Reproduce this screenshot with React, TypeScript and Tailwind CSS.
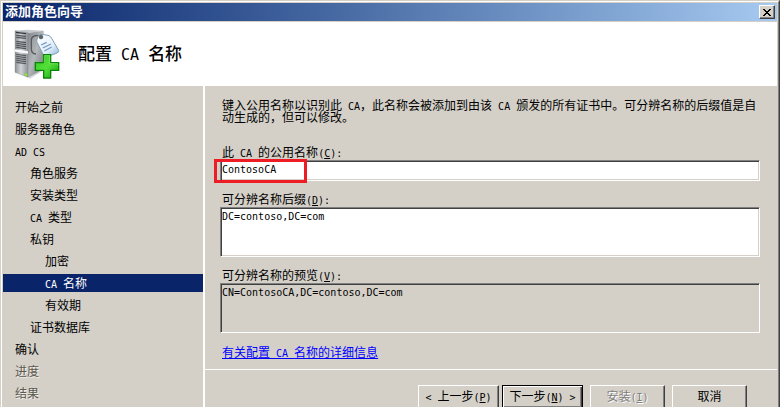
import type { ReactNode } from "react";
import clsx from "clsx";

interface IStep {
  label: string;
  level: 0 | 1 | 2;
  active?: boolean;
  disabled?: boolean;
}

const steps: IStep[] = [
  { label: "开始之前", level: 0 },
  { label: "服务器角色", level: 0 },
  { label: "AD CS", level: 0 },
  { label: "角色服务", level: 1 },
  { label: "安装类型", level: 1 },
  { label: "CA 类型", level: 1 },
  { label: "私钥", level: 1 },
  { label: "加密", level: 2 },
  { label: "CA 名称", level: 2, active: true },
  { label: "有效期", level: 2 },
  { label: "证书数据库", level: 1 },
  { label: "确认", level: 0 },
  { label: "进度", level: 0, disabled: true },
  { label: "结果", level: 0, disabled: true },
];

const indents = ["pl-3", "pl-[27px]", "pl-[42px]"];

const sunken =
  "block w-full resize-none border border-t-[#808080] border-l-[#808080] border-r-white border-b-white px-px font-['DejaVu_Sans_Mono',monospace] text-[10px] leading-3 text-black outline-none inset-shadow-[1px_1px_0_#404040,-1px_-1px_0_#d4d0c8]";

// Latin runs are half as wide as the Chinese characters around them
const Latin = ({ children }: { children: ReactNode }) => (
  <span className="font-['DejaVu_Sans_Mono',monospace] text-[10px] leading-2 whitespace-pre">
    {children}
  </span>
);

const mixed = (text: string) =>
  text
    .split(/([\x20-\x7e]+)/)
    .map((part, i) => (i % 2 ? <Latin key={i}>{part}</Latin> : part));

const Hotkey = ({ letter, after = "" }: { letter: string; after?: string }) => (
  <Latin>
    (<u className="underline-offset-1">{letter}</u>){after}
  </Latin>
);

const ServerIcon = () => (
  <svg className="size-[60px]" viewBox="0 0 180 180" aria-hidden="true">
    <defs>
      <linearGradient id="side" x1="0" y1="0" x2="1" y2="1">
        <stop offset="0" stopColor="#7f8487" />
        <stop offset="0.5" stopColor="#b4b8bb" />
        <stop offset="1" stopColor="#6c7073" />
      </linearGradient>
      <linearGradient id="front" x1="0" y1="0" x2="1" y2="0">
        <stop offset="0" stopColor="#8b9094" />
        <stop offset="0.45" stopColor="#cfd3d6" />
        <stop offset="1" stopColor="#8f9498" />
      </linearGradient>
      <linearGradient id="tag" x1="0" y1="0" x2="1" y2="1">
        <stop offset="0" stopColor="#ffffff" />
        <stop offset="0.6" stopColor="#e3f0f9" />
        <stop offset="1" stopColor="#88b4d6" />
      </linearGradient>
      <linearGradient id="plus" x1="0" y1="0" x2="1" y2="1">
        <stop offset="0" stopColor="#2cc421" />
        <stop offset="0.5" stopColor="#55e03a" />
        <stop offset="1" stopColor="#16a312" />
      </linearGradient>
    </defs>
    <path d="M60 160 L66 164 L112 136 V120 L60 140Z" fill="#b8babb" opacity="0.6" />
    <path d="M57 26 L107 20 V135 L62 160 L57 158Z" fill="url(#side)" />
    <path d="M21 20 L56 17 L107 20 L60 28Z" fill="#c4c8cb" />
    <path d="M21 20 L60 26 V160 L21 145Z" fill="url(#front)" stroke="#74787b" />
    <path d="M24 25 L54 29" stroke="#303437" strokeWidth="4" />
    <path
      d="M25 34 L54 37 M25 40 L54 43 M25 52 L54 56 M25 58 L54 62 M25 64 L54 68 M25 70 L54 74"
      stroke="#505558"
      strokeWidth="4"
    />
    <path d="M21 76 L60 82 V89 L21 83Z" fill="#f7f8f9" />
    <path
      d="M25 91 L54 95 M25 97 L54 101 M25 103 L54 107 M25 109 L54 113 M25 115 L54 119"
      stroke="#565b5e"
      strokeWidth="4"
    />
    <path d="M51 147 L58 149 V156 L51 154Z" fill="#98ff21" stroke="#58b31c" />
    <path
      d="M99 37 C82 31 69 37 70 49 V76 Q71 89 84 90"
      fill="none"
      stroke="#585c60"
      strokeWidth="4"
    />
    <path
      d="M91 36 Q94 30 105 31 L123 35 Q129 38 131 43 L152 79 Q153 84 148 87 L114 99 Q109 99 107 94 L86 53 Q86 46 91 36Z"
      fill="url(#tag)"
      stroke="#7f9fb4"
      strokeWidth="3"
    />
    <circle cx="99" cy="39" r="6" fill="#5e6265" stroke="#36393c" />
    <path
      d="M99 63 L116 55 M104 72 L129 60 M109 81 L131 69"
      stroke="#7898c6"
      strokeWidth="4"
    />
    <path
      d="M107 92 H128 V116 H152 V139 H128 V162 H107 V139 H82 V116 H107Z"
      fill="url(#plus)"
      stroke="#078607"
      strokeWidth="4"
    />
    <path
      d="M109 119 V95 H125 V119 H149 V125"
      fill="none"
      stroke="#a2f28b"
      strokeWidth="2"
      opacity="0.7"
    />
  </svg>
);

interface IButtonProps {
  children: ReactNode;
  wide?: boolean;
  primary?: boolean;
  disabled?: boolean;
}

const WizardButton = ({ children, wide, primary, disabled }: IButtonProps) => (
  <button
    type="button"
    disabled={disabled}
    className={clsx(
      "h-6 shrink-0 border pb-px text-xs leading-3 whitespace-nowrap",
      wide ? "w-[81px]" : "w-[75px]",
      primary
        ? "border-black inset-shadow-[1px_1px_0_#fff,-1px_-1px_0_#404040,-2px_-2px_0_#808080]"
        : "border-t-white border-l-white border-r-[#404040] border-b-[#404040] inset-shadow-[-1px_-1px_0_#808080]",
      disabled && "text-[#808080] text-shadow-[1px_1px_0_#fff]",
    )}
  >
    {children}
  </button>
);

const StepList = () => (
  <nav className="w-[202px] shrink-0 border-r-2 border-white pt-3">
    <ul className="flex flex-col gap-1">
      {steps.map(({ label, level, active, disabled }) => (
        <li
          key={label}
          aria-current={active ? "step" : undefined}
          className={clsx(
            "h-[18px] leading-5",
            indents[level],
            active && "bg-[#0a246a] text-white",
            disabled && "text-[#5c584e] text-shadow-[1px_1px_0_#eeece8]",
          )}
        >
          {mixed(label)}
        </li>
      ))}
    </ul>
  </nav>
);

const CaNameForm = () => (
  <form className="pt-3.5 pr-[17px] pl-[15px]">
    <p className="pl-[2px] leading-3">
      {mixed(
        "键入公用名称以识别此 CA，此名称会被添加到由该 CA 颁发的所有证书中。可分辨名称的后缀值是自动生成的，但可以修改。",
      )}
    </p>

    <label htmlFor="common-name" className="mt-[22px] block pl-[2px] leading-3.5">
      {mixed("此 CA 的公用名称")}
      <Hotkey letter="C" after=":" />
    </label>
    <div className="relative">
      <input
        id="common-name"
        type="text"
        defaultValue="ContosoCA"
        className={clsx(sunken, "h-[21px] bg-white pb-[2px]")}
      />
      <div className="pointer-events-none absolute -top-px -left-1.5 h-6 w-[93px] border-3 border-[#ee1c25]" />
    </div>

    <label htmlFor="suffix" className="mt-3 block pl-[2px] leading-3.5">
      可分辨名称后缀
      <Hotkey letter="D" after=":" />
    </label>
    <textarea
      id="suffix"
      defaultValue="DC=contoso,DC=com"
      className={clsx(sunken, "h-[50px] bg-white pt-[3px]")}
    />

    <label htmlFor="preview" className="mt-3 block pl-[2px] leading-3.5">
      可分辨名称的预览
      <Hotkey letter="V" after=":" />
    </label>
    <textarea
      id="preview"
      readOnly
      defaultValue="CN=ContosoCA,DC=contoso,DC=com"
      className={clsx(sunken, "h-[50px] bg-[#d4d0c8] pt-[3px]")}
    />

    <div className="mt-3 pb-2 pl-[2px] leading-4">
      <a href="#details" className="text-[#0000ff] underline underline-offset-1">
        {mixed("有关配置 CA 名称的详细信息")}
      </a>
    </div>
  </form>
);

const App = () => {
  return (
    <div className="flex h-screen flex-col overflow-hidden border-t border-r border-l border-t-[#d4d0c8] border-r-[#404040] border-l-[#d4d0c8] bg-[#d4d0c8] font-['Liberation_Sans','Noto_Sans_CJK_SC',sans-serif] text-xs text-black">
      <div className="flex min-h-0 flex-1 flex-col border-t border-r border-l border-t-white border-r-[#808080] border-l-white pt-px pr-px pl-px">
        <div className="flex h-[18px] shrink-0 items-center justify-between bg-linear-to-r from-[#0a246a] to-[#a6caf0] pr-[2px] pl-[2px]">
          <h1 className="text-[13px] leading-[18px] font-bold text-white">
            添加角色向导
          </h1>
          <button
            type="button"
            aria-label="关闭"
            className="flex h-3.5 w-4 items-center justify-center border border-t-white border-r-[#404040] border-b-[#404040] border-l-white bg-[#d4d0c8] inset-shadow-[-1px_-1px_0_#808080]"
          >
            <svg
              className="h-[7px] w-2"
              viewBox="0 0 8 7"
              shapeRendering="crispEdges"
              aria-hidden="true"
            >
              <path d="M0 0h2v1h1v1h2v-1h1v-1h2v1h-1v1h-1v1h-1v1h1v1h1v1h1v1h-2v-1h-1v-1h-2v1h-1v1h-2v-1h1v-1h1v-1h1v-1h-1v-1h-1v-1h-1z" />
            </svg>
          </button>
        </div>

        <header className="mt-px flex h-16 shrink-0 items-center gap-2.5 bg-white pl-[5px]">
          <ServerIcon />
          <h2 className="pt-px text-[17px] leading-6 font-medium">
            配置
            <span className="font-['DejaVu_Sans_Mono',monospace] text-[15px] whitespace-pre">
              {" CA "}
            </span>
            名称
          </h2>
        </header>

        <div className="flex min-h-0 flex-1">
          <StepList />
          <main className="min-w-0 flex-1">
            <CaNameForm />
            <footer className="flex justify-end border-t border-white pt-[15px] pr-[30px]">
              <div className="flex gap-[3px]">
                <WizardButton wide>
                  <Latin>{"< "}</Latin>上一步
                  <Hotkey letter="P" />
                </WizardButton>
                <WizardButton wide primary>
                  下一步
                  <Hotkey letter="N" after=" >" />
                </WizardButton>
              </div>
              <div className="ml-[7px] flex gap-[7px]">
                <WizardButton disabled>
                  安装
                  <Hotkey letter="I" />
                </WizardButton>
                <WizardButton>取消</WizardButton>
              </div>
            </footer>
          </main>
        </div>
      </div>
    </div>
  );
};

export default App;
